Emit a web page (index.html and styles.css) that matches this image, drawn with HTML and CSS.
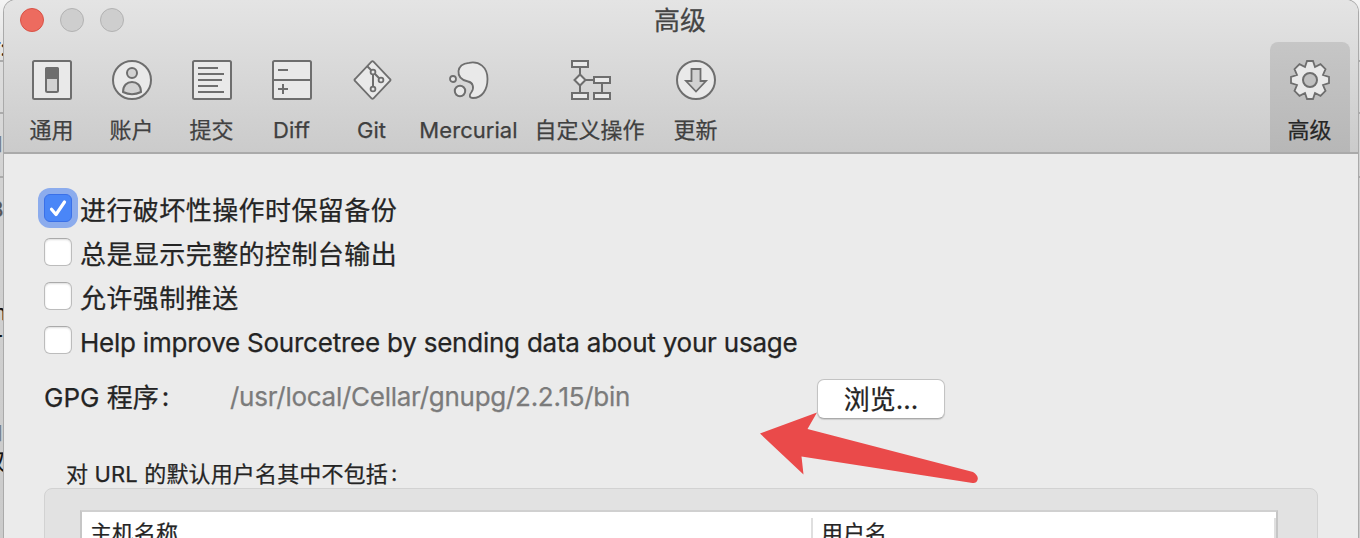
FILE: index.html
```html
<!DOCTYPE html>
<html lang="zh-CN">
<head>
<meta charset="utf-8">
<title>高级</title>
<link rel="stylesheet" href="styles.css">
</head>
<body>
<div class="desktop">
  <div class="backdrop" aria-hidden="true">
    <i class="rule r1"></i><i class="rule r2"></i><i class="rule r3"></i>
    <span class="peek p0">T:</span>
    <span class="peek p1">d</span>
    <span class="peek p2">8</span>
    <span class="peek p3">m</span>
    <span class="peek p4">r</span>
    <span class="peek p5">d</span>
    <span class="peek p6">双</span>
  </div>
  <main class="window">
    <header class="toolbar">
      <div class="titlebar">
        <div class="lights"><i class="light close"></i><i class="light"></i><i class="light"></i></div>
        <h1 class="title">高级</h1>
      </div>
      <nav class="tabs">
        <div class="tab">
          <svg class="icon" viewBox="0 0 40 40"><rect x="1" y="1" width="38" height="38" rx="1.5"/><rect class="hole" x="14" y="8" width="12" height="24" rx="1.5"/><path class="solid" d="M13 19V9q0-2 2-2h10q2 0 2 2v10z"/></svg>
          <span>通用</span>
        </div>
        <div class="tab">
          <svg class="icon" viewBox="0 0 40 40"><circle cx="20" cy="20" r="19"/><circle class="hole" cx="20" cy="13" r="5"/><path class="hole" d="M11 32C11 25.5 15 22 20 22s9 3.5 9 10Q20 36.500 11 32z"/></svg>
          <span>账户</span>
        </div>
        <div class="tab">
          <svg class="icon" viewBox="0 0 40 40"><rect x="1" y="1" width="38" height="38" rx="1.5"/><path d="M6 8h20M6 14h26M6 20h24M6 26h20M6 32h26"/></svg>
          <span>提交</span>
        </div>
        <div class="tab">
          <svg class="icon" viewBox="0 0 40 40"><rect x="1" y="1" width="38" height="38" rx="1.5"/><path d="M1 20h38M6 10h10M6 29h10M11 24v10"/></svg>
          <span class="latin">Diff</span>
        </div>
        <div class="tab">
          <svg class="icon" viewBox="0 0 40 40"><path class="thin" d="M19.500 1.700Q20.500.8 21.500 1.700L38 19q1 1 0 2L21.500 38.300q-1 .9-2 0L3 21q-1-1 0-2z"/><path d="M15.500 6.500l4 4M21 14v13M22.800 13.700l4.400 4.600"/><circle class="thin" cx="21" cy="12" r="2.400"/><circle class="thin" cx="29" cy="20" r="2.400"/><circle class="thin" cx="21" cy="29" r="2.400"/></svg>
          <span class="latin">Git</span>
        </div>
        <div class="tab tab-mercurial">
          <svg class="icon" viewBox="0 0 40 40"><path class="thin" d="M20 2.800C30 .8 38.500 7 38.500 19C38.500 30 33 38 24 38C20 38 20 35 22.500 32C25.500 27.500 24 22.500 19 21.500C12 20 9 16 9.500 11C10 6.500 14 3.500 20 2.800z"/><circle class="thin" cx="4" cy="19" r="3"/><circle cx="11" cy="31" r="5.200"/></svg>
          <span class="latin">Mercurial</span>
        </div>
        <div class="tab tab-custom">
          <svg class="icon" viewBox="0 0 40 40"><path d="M9 7v26M9 20h14M31 23v10"/><rect x="1" y="1" width="16" height="6"/><rect x="23" y="17" width="16" height="6"/><rect x="1" y="33" width="16" height="6"/><rect x="23" y="33" width="16" height="6"/><path d="M9 14.500l5.500 5.500L9 25.500 3.500 20z"/></svg>
          <span>自定义操作</span>
        </div>
        <div class="tab">
          <svg class="icon" viewBox="0 0 40 40"><circle cx="20" cy="20" r="19"/><path class="hole thin" d="M15.500 9h9v12h5.500L20 31.500 10 21h5.500z"/></svg>
          <span>更新</span>
        </div>
        <div class="tab active">
          <svg class="icon" viewBox="0 0 40 40"><path class="thin" d="M17 1h6l2 6 5.500-2.800 5 5L33 15l6 2v6l-6 2 2.500 5.800-5 5L25 33l-2 6h-6l-2-6-5.500 2.800-5-5L7 25l-6-2v-6l6-2-2.500-5.800 5-5L15 7z"/><circle class="hub" cx="20" cy="20" r="7"/></svg>
          <span>高级</span>
        </div>
      </nav>
    </header>
    <section class="pane">
      <div class="options">
        <div class="option"><span class="box checked"><svg viewBox="0 0 28 28"><path d="M7.500 15.300l4.500 5.200L20.500 8"/></svg></span><span>进行破坏性操作时保留备份</span></div>
        <div class="option"><span class="box"></span><span>总是显示完整的控制台输出</span></div>
        <div class="option"><span class="box"></span><span>允许强制推送</span></div>
        <div class="option"><span class="box"></span><span class="help">Help improve Sourcetree by sending data about your usage</span></div>
      </div>
      <div class="gpg">
        <span class="gpg-label">GPG 程序<span class="colon">:</span></span>
        <span class="path">/usr/local/Cellar/gnupg/2.2.15/bin</span>
        <span class="browse">浏览...</span>
      </div>
      <div class="caption">对 URL 的默认用户名其中不包括<span class="colon">:</span></div>
      <div class="group">
        <div class="table">
          <div class="cell host">主机名称</div>
          <div class="cell user">用户名</div>
        </div>
      </div>
    </section>
  </main>
  <svg class="arrow" viewBox="0 0 220 74"><path d="M0 21.500L57 0.500 47.500 17 213 60q6 4 4.500 8-1 3.500-5 3L41.500 44.500 43.500 62.500z"/></svg>
</div>
</body>
</html>
```
FILE: styles.css
```css
* { box-sizing: border-box; }
body {
  margin: 0;
  font-family: Inter, "Noto Sans CJK SC", sans-serif;
  color: #242424;
  -webkit-text-stroke: .25px;
}
.desktop {
  position: relative;
  width: 1360px;
  height: 538px;
  overflow: hidden;
  padding: 0 2px 0 4px;
  background: linear-gradient(#f4f4f4, #ddd 65px, #d2d2d2 180px, #cbcbcb);
}
.backdrop { position: absolute; inset: 0; }
.rule { position: absolute; left: 0; right: 0; height: 2px; background: #ababab; }
.r1 { top: 60px; }
.r2 { top: 112px; }
.r3 { top: 176px; }
.peek { position: absolute; line-height: 26px; font-size: 22px; white-space: nowrap; color: #111; }
.p0 { left: -13px; top: 37px; }
.p1 { left: -11px; top: 131px; color: #777; }
.p2 { left: -10px; top: 196px; color: #555; }
.p3 { left: -13px; top: 299px; }
.p4 { left: -6px; top: 326px; }
.p5 { left: -11px; top: 420px; color: #777; }
.p6 { left: -17px; top: 448px; }

.window {
  position: relative;
  height: 600px;
  border-radius: 12px 12px 0 0;
  overflow: hidden;
  background: #ebebeb;
  box-shadow: 0 0 0 1px #aaa;
}
.toolbar {
  height: 154px;
  border-bottom: 2px solid #aaa;
  background: linear-gradient(#e4e4e4, #cbcbcb);
}
.titlebar { position: relative; height: 42px; }
.lights { display: flex; gap: 16px; padding: 8px 0 0 16px; }
.light { width: 24px; height: 24px; border-radius: 50%; border: 1px solid #b2b2b2; background: #cecece; }
.light.close { border-color: #d85246; background: #ed6b5f; }
.title {
  position: absolute;
  inset: 0 2px 0 0;
  margin: 0;
  font-size: 26px;
  font-weight: 400;
  line-height: 42px;
  text-align: center;
  color: #454545;
}
.tabs { display: flex; height: 110px; padding: 0 8px; }
.tab {
  width: 80px;
  display: flex;
  flex-direction: column;
  align-items: center;
  padding-top: 18px;
  font-size: 22px;
  line-height: 32px;
  color: #404040;
  white-space: nowrap;
}
.tab > span { margin: 14px 1px 0 0; }
.tab-mercurial { width: 114px; }
.tab-custom { width: 130px; }
.tab-custom > span { margin-right: 3px; }
.tab.active { margin-left: auto; border-radius: 8px 8px 0 0; background: linear-gradient(#c6c6c6, #b7b7b7); color: #262626; }
.latin { letter-spacing: .05px; }
.icon { width: 40px; height: 40px; flex: none; fill: #e9e9e9; stroke: #6e6e6e; stroke-width: 2; }
.icon .hole { fill: #d2d2d2; }
.icon .solid { fill: #6e6e6e; stroke: none; }
.icon .thin { stroke-width: 1.8; }
.icon .hub { fill: #c0c0c0; stroke-width: 2; }

.pane { padding: 34px 40px 0; }
.option { display: flex; align-items: center; gap: 8px; height: 44px; font-size: 26px; letter-spacing: .43px; line-height: 44px; white-space: nowrap; }
.option > span + span { margin-top: 1px; }
.box {
  width: 28px;
  height: 28px;
  flex: none;
  margin-top: -4px;
  border: 1px solid #bcbcbc;
  border-top-color: #aaa;
  border-radius: 6px;
  background: #fff;
  box-shadow: inset 0 1px 2px #ddd;
}
.box.checked { border-color: #3a70e8; background: #4a86f7; box-shadow: 0 0 0 6px #8caced; }
.box svg { display: block; margin: -1px; width: 28px; height: 28px; fill: none; stroke: #fff; stroke-width: 3.2; stroke-linecap: round; stroke-linejoin: round; }
.option .help { letter-spacing: -.23px; }
.gpg { display: flex; align-items: center; height: 42px; margin-top: 14px; font-size: 26px; white-space: nowrap; }
.gpg-label { width: 186px; margin-top: -8px; }
.colon { position: relative; top: -1px; margin-left: 3px; }
.path { width: 587px; margin-top: -5px; letter-spacing: -.27px; color: #7b7b7b; }
.browse {
  width: 128px;
  height: 40px;
  border: 1px solid #c3c3c3;
  border-bottom-color: #aaa;
  border-radius: 7px;
  background: #fff;
  box-shadow: 0 1px 1px #ccc;
  line-height: 40px;
  text-align: center;
}
.caption { margin: 38px 0 0 22px; height: 30px; font-size: 22px; letter-spacing: .15px; line-height: 32px; white-space: nowrap; }
.group { width: 1274px; height: 120px; padding: 21px 39px 0 35px; border: 1px solid #d2d2d2; border-radius: 8px; background: #e2e2e2; }
.table { display: flex; height: 80px; border: 2px solid #c6c6c6; border-top-color: #d0d0d0; padding: 6px 0 0; background: #fff; font-size: 22px; line-height: 31px; }
.cell { padding-left: 8px; border-right: 2px solid #dfdfdf; }
.host { width: 731px; }
.user { flex: 1; }
.arrow { position: absolute; left: 760px; top: 412px; width: 220px; height: 74px; fill: #ea4a4a; }
```
